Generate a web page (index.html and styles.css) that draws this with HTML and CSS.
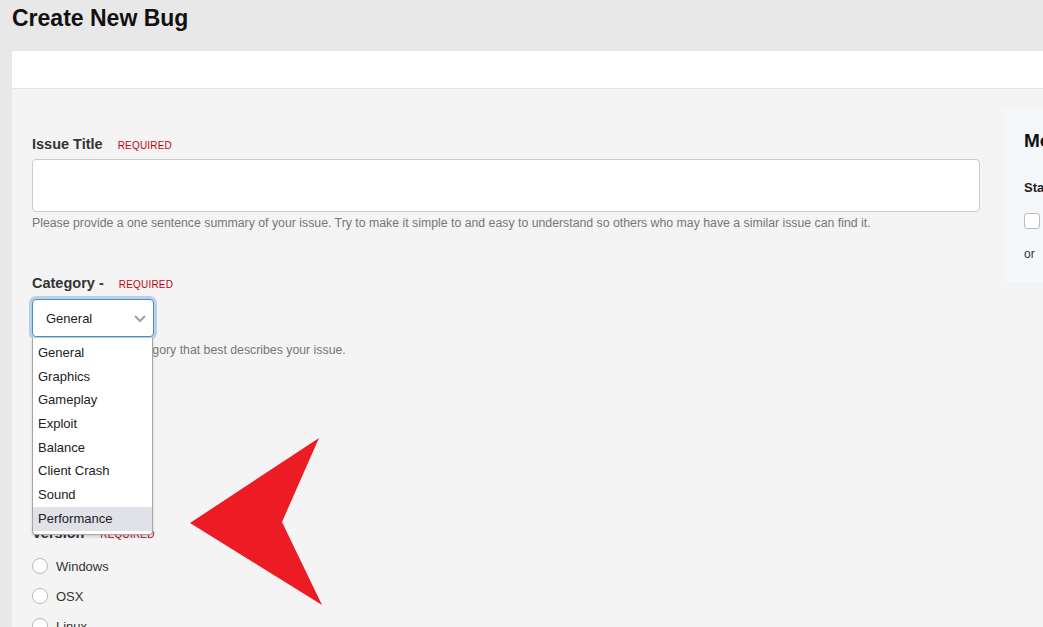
FILE: index.html
```html
<!DOCTYPE html>
<html lang="en">
<head>
  <meta charset="UTF-8" />
  <meta name="viewport" content="width=device-width, initial-scale=1.0" />
  <title>Create New Bug</title>
  <link rel="stylesheet" href="styles.css">
</head>
<body>
  <div class="page">
    <h1 class="page-title">Create New Bug</h1>

    <div class="card">
      <div class="card-bar"></div>

      <div class="card-body">
        <!-- main form -->
        <div class="form-col">
          <div class="field">
            <div class="field-label">Issue Title <span class="req">REQUIRED</span></div>
            <div class="text-input"></div>
            <div class="help">Please provide a one sentence summary of your issue. Try to make it simple to and easy to understand so others who may have a similar issue can find it.</div>
          </div>

          <div class="field field-category">
            <div class="field-label">Category - <span class="req">REQUIRED</span></div>
            <div class="select-wrap">
              <div class="select-box">
                <span>General</span>
                <svg class="chevron" width="12" height="8" viewBox="0 0 12 8"><polyline points="1,1 6,6 11,1" fill="none" stroke="#a0a0a0" stroke-width="2"/></svg>
              </div>
              <ul class="select-list">
                <li>General</li>
                <li>Graphics</li>
                <li>Gameplay</li>
                <li>Exploit</li>
                <li>Balance</li>
                <li>Client Crash</li>
                <li>Sound</li>
                <li class="hover">Performance</li>
              </ul>
            </div>
            <div class="help help-select">Please select the category that best describes your issue.</div>
          </div>

          <div class="field field-version">
            <div class="field-label">Version - <span class="req req-tight">REQUIRED</span></div>
            <label class="radio-row"><span class="radio"></span>Windows</label>
            <label class="radio-row"><span class="radio"></span>OSX</label>
            <label class="radio-row"><span class="radio"></span>Linux</label>
          </div>
        </div>

        <!-- side panel -->
        <div class="side-panel">
          <h2>More</h2>
          <div class="side-label">Status</div>
          <div class="check-row"><span class="checkbox"></span></div>
          <div class="side-or">or</div>
        </div>
      </div>
    </div>
  </div>

  <!-- red pointer arrow -->
  <svg class="pointer" width="1043" height="627" viewBox="0 0 1043 627">
    <polygon points="190,523 319,438 282,522 322,605" fill="#ed1c24"/>
  </svg>
</body>
</html>
```

FILE: styles.css
```css
/* base */
body {
  margin: 0;
  font-family: "Liberation Sans", Arial, sans-serif;
  background: #e8e8e8;
  color: #333;
  overflow: hidden;
}
.page {
  padding-left: 12px;
  width: 1400px;
}
.page-title {
  margin: 3px 0 18px;
  font-size: 23px;
  line-height: 30px;
  font-weight: bold;
  color: #111;
}

/* card */
.card-bar {
  height: 37px;
  background: #fff;
  border-bottom: 1px solid #e6e6e6;
}
.card-body {
  display: flex;
  gap: 24px;
  padding: 20px;
  background: #f4f4f4;
  height: 600px;
}
.form-col {
  width: 948px;
  flex-shrink: 0;
  padding-top: 27px;
}

/* fields */
.field-label {
  display: flex;
  align-items: baseline;
  height: 16px;
  font-size: 14.5px;
  line-height: 16px;
  font-weight: bold;
  color: #333;
}
.req {
  margin-left: 15px;
  font-size: 10px;
  line-height: 10px;
  font-weight: normal;
  color: #c4000f;
  letter-spacing: 0.2px;
}
.req-tight { margin-left: 7px; }
.text-input {
  margin-top: 7px;
  height: 51px;
  background: #fff;
  border: 1px solid #ccc;
  border-radius: 4px;
}
.help {
  margin-top: 4px;
  font-size: 12.3px;
  line-height: 14px;
  color: #777;
}
.field-category { margin-top: 45px; }
.select-wrap {
  position: relative;
  margin-top: 8px;
  width: 122px;
}
.select-box {
  display: flex;
  align-items: center;
  justify-content: space-between;
  box-sizing: border-box;
  height: 38px;
  padding: 0 7px 0 13px;
  background: #fff;
  border: 1px solid #4d8cc4;
  border-radius: 4px;
  box-shadow: 0 0 0 3px #b9d1e6;
  font-size: 13px;
  color: #222;
}
.chevron { margin-top: 1px; }
.select-list {
  position: absolute;
  top: 39px;
  left: 0;
  width: 119px;
  margin: 0;
  padding: 3px 0 3px;
  list-style: none;
  background: #fff;
  border: 1px solid #a5a5a5;
  border-top: none;
  border-radius: 0 0 4px 4px;
  box-shadow: 0 2px 3px rgba(0,0,0,0.15);
  z-index: 10;
}
.select-list li {
  height: 23.7px;
  line-height: 23.7px;
  padding-left: 5px;
  font-size: 13px;
  color: #222;
}
.select-list li.hover { background: #e1e1e8; }
.help-select { margin-top: 6px; }

.field-version { margin-top: 168px; }
.radio-row {
  display: flex;
  align-items: center;
  height: 30px;
  font-size: 13px;
  color: #333;
}
.field-version .field-label { margin-bottom: 10px; }
.radio {
  box-sizing: border-box;
  width: 16px;
  height: 16px;
  margin-right: 8px;
  border: 1px solid #bbb;
  border-radius: 50%;
  background: #fff;
}

/* side panel */
.side-panel {
  width: 300px;
  flex-shrink: 0;
  box-sizing: border-box;
  height: 173px;
  padding: 20px 20px;
  background: #f5f8fb;
}
.side-panel h2 {
  margin: 0;
  font-size: 19px;
  line-height: 24px;
  color: #111;
}
.side-label {
  margin-top: 27px;
  font-size: 13px;
  line-height: 16px;
  font-weight: bold;
  color: #222;
}
.check-row { margin-top: 17px; height: 16px; }
.checkbox {
  display: block;
  box-sizing: border-box;
  width: 16px;
  height: 16px;
  border: 1px solid #bbb;
  border-radius: 3px;
  background: #fff;
}
.side-or {
  margin-top: 18px;
  font-size: 12px;
  line-height: 14px;
  color: #333;
}

/* pointer overlay */
.pointer {
  position: absolute;
  top: 0;
  left: 0;
  pointer-events: none;
  z-index: 20;
}
```
